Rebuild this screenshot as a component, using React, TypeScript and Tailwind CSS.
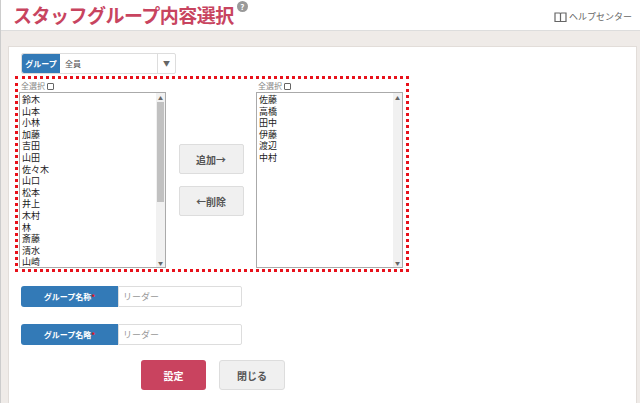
import React from "react";

const left = ["鈴木","山本","小林","加藤","吉田","山田","佐々木","山口","松本","井上","木村","林","斎藤","清水","山崎"];
const right = ["佐藤","高橋","田中","伊藤","渡辺","中村"];

function List({ items, scroll }: { items: string[]; scroll?: boolean }) {
  return (
    <div>
      <div className="flex items-center gap-[2px] text-[8px] text-[#888] h-[12px] pl-[2px]">全選択<span className="inline-block w-[7px] h-[7px] border border-[#666] bg-white rounded-[1px]" /></div>
      <div className="w-[147px] h-[176px] border border-[#aaa] bg-white flex overflow-hidden">
        <div className="flex-1 pl-[2px] pt-[1px] text-[9px] leading-[11.6px] text-[#222]">
          {items.map((s) => <div key={s}>{s}</div>)}
        </div>
        <div className="w-[9px] flex flex-col items-center bg-[#f1f1f1]">
          <div className="h-[9px] text-[5px] text-[#666] leading-[9px]">▲</div>
          <div className="flex-1 w-[7px]">{scroll && <div className="h-[100px] bg-[#c1c1c1]" />}</div>
          <div className="h-[9px] text-[5px] text-[#666] leading-[9px]">▼</div>
        </div>
      </div>
    </div>
  );
}

export default function App() {
  return (
    <div className="w-[640px] h-[403px] bg-[#efebe8] border-l border-[#ccc] overflow-hidden" style={{ fontFamily: '"Noto Sans CJK JP", sans-serif' }}>
      <div className="h-[31px] bg-white border-b border-[#ddd] flex items-start justify-between pl-[12px] pr-[8px]">
        <div className="flex items-start">
          <span className="text-[19px] font-bold text-[#c8445f] leading-[30px] tracking-[-0.5px]">スタッフグループ内容選択</span>
          <span className="ml-[3px] mt-[1px] w-[11px] h-[11px] rounded-full bg-[#999] text-white text-[8px] font-bold flex items-center justify-center">?</span>
        </div>
        <div className="flex items-center gap-[2px] mt-[10px] text-[9px] text-[#666]">
          <svg width="13" height="10" viewBox="0 0 13 10" fill="none" stroke="#666" strokeWidth="1.2"><path d="M1 1h4.5a1 1 0 0 1 1 1v7.5H1z M12 1H7.5a1 1 0 0 0-1 1v7.5H12z"/></svg>
          ヘルプセンター
        </div>
      </div>
      <div className="ml-[7px] mt-[15px] w-[629px] h-[360px] bg-white border border-[#e2ddd9] pt-[6px] pl-[12px]">
        <div className="flex w-[155px] h-[21px] border border-[#ddd] rounded-[2px] text-[8px]">
          <div className="w-[38px] bg-[#337ab7] text-white font-bold flex items-center justify-center rounded-l-[2px]">グループ</div>
          <div className="flex-1 flex items-center pl-[5px] text-[#555]">全員</div>
          <div className="w-[18px] border-l border-[#ddd] flex items-center justify-center text-[#666] text-[7px]">▼</div>
        </div>
        <div className="-ml-[6px] mt-[2px] w-[394px] h-[196px] border-[3px] border-dotted border-[#e8111b] flex pl-[1px] pt-[1px]">
          <List items={left} scroll />
          <div className="w-[90px] flex flex-col items-center pt-[64px] gap-[12px]">
            <div className="w-[65px] h-[30px] bg-[#f0f0f0] border border-[#ddd] rounded-[2px] flex items-center justify-center text-[10px] font-bold text-[#555]">追加→</div>
            <div className="w-[65px] h-[30px] bg-[#f0f0f0] border border-[#ddd] rounded-[2px] flex items-center justify-center text-[10px] font-bold text-[#555]">←削除</div>
          </div>
          <List items={right} />
        </div>
        {["グループ名称", "グループ名略"].map((l, i) => (
          <div key={l} className={`flex h-[21px] ${i === 0 ? "mt-[14px]" : "mt-[17px]"}`}>
            <div className="w-[97px] bg-[#337ab7] text-white font-bold text-[8px] rounded-l-[3px] flex items-center justify-center">{l}<span className="text-[#e8111b]">*</span></div>
            <div className="w-[124px] border border-[#ddd] rounded-r-[2px] flex items-center pl-[4px] text-[9px] text-[#999]">リーダー</div>
          </div>
        ))}
        <div className="flex gap-[13px] ml-[120px] mt-[15px]">
          <div className="w-[65px] h-[30px] bg-[#c9435f] rounded-[3px] text-white font-bold text-[10px] flex items-center justify-center">設定</div>
          <div className="w-[66px] h-[30px] bg-[#f0f0f0] border border-[#ddd] rounded-[3px] text-[#555] font-bold text-[10px] flex items-center justify-center">閉じる</div>
        </div>
      </div>
    </div>
  );
}
